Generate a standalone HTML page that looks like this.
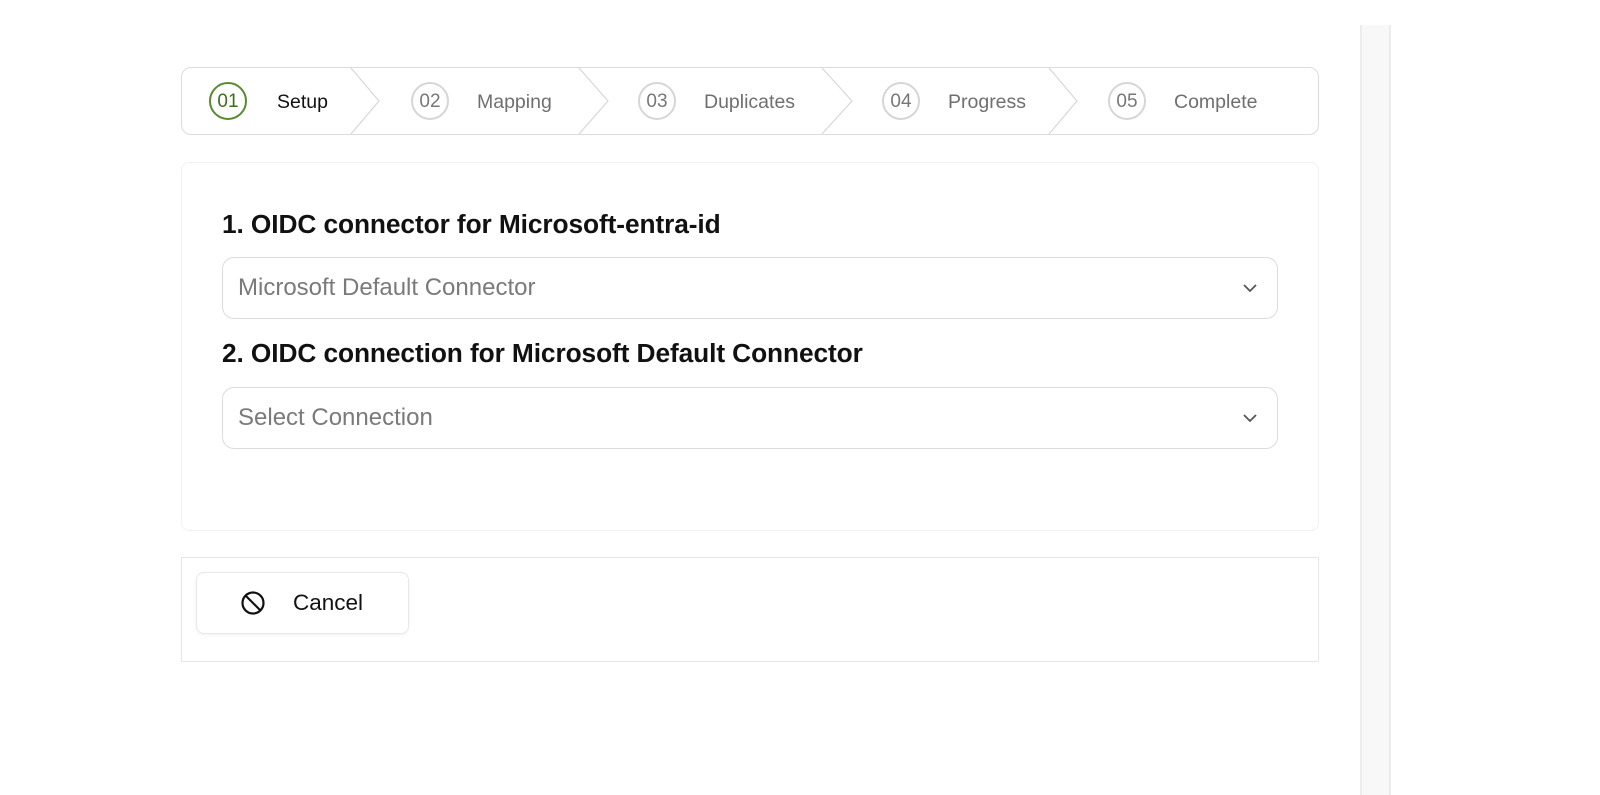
<!DOCTYPE html>
<html><head><meta charset="utf-8"><style>
*{box-sizing:border-box;margin:0;padding:0}
body{width:1600px;height:795px;background:#fff;font-family:"Liberation Sans",sans-serif;position:relative;overflow:hidden}
.a{position:absolute}
.circ{position:absolute;width:38px;height:38px;border-radius:50%;border:2.5px solid #d6d6d6;color:#777;font-size:19px;display:flex;align-items:center;justify-content:center;padding-top:2px}
.lbl{position:absolute;top:91px;font-size:19.5px;color:#6f6f6f;line-height:22px}
.inp{position:absolute;left:222px;width:1056px;height:62px;border:1px solid #dcdcdc;border-radius:12px;font-size:24px;color:#7a7a7a;padding-left:15px;line-height:60px}
.h{position:absolute;left:222px;font-size:26.3px;font-weight:bold;color:#111;letter-spacing:-0.1px}
</style></head><body>
<div class="a" style="left:1360px;top:25px;width:31px;height:770px;background:#f8f8f8;border-left:2px solid #ececec;border-right:2px solid #ececec"></div>

<div class="a" style="left:181px;top:67px;width:1138px;height:68px;border:1px solid #dcdcdc;border-radius:10px"></div>
<svg class="a" style="left:0;top:0" width="1600" height="140">
<g fill="none" stroke="#d8d8d8" stroke-width="1.2">
<polyline points="351,68 379,101 351,134"/>
<polyline points="579,68 608,101 579,134"/>
<polyline points="822,68 852,101 822,134"/>
<polyline points="1049,68 1077,101 1049,134"/>
</g></svg>
<div class="circ" style="left:209px;top:82px;border-color:#5a8a2e;color:#3d6e1c">01</div>
<div class="lbl" style="left:277px;color:#111">Setup</div>
<div class="circ" style="left:411px;top:82px">02</div>
<div class="lbl" style="left:477px">Mapping</div>
<div class="circ" style="left:638px;top:82px">03</div>
<div class="lbl" style="left:704px">Duplicates</div>
<div class="circ" style="left:882px;top:82px">04</div>
<div class="lbl" style="left:948px">Progress</div>
<div class="circ" style="left:1108px;top:82px">05</div>
<div class="lbl" style="left:1174px">Complete</div>

<div class="a" style="left:181px;top:162px;width:1138px;height:369px;border:1px solid #f1f1f1;border-radius:8px"></div>
<div class="h" style="top:209px">1. OIDC connector for Microsoft-entra-id</div>
<div class="inp" style="top:257px">Microsoft Default Connector</div>
<div class="h" style="top:338px">2. OIDC connection for Microsoft Default Connector</div>
<div class="inp" style="top:387px">Select Connection</div>
<svg class="a" style="left:1243px;top:283px" width="14" height="10"><polyline points="1,2 7,8 13,2" fill="none" stroke="#555" stroke-width="1.8"/></svg>
<svg class="a" style="left:1243px;top:413px" width="14" height="10"><polyline points="1,2 7,8 13,2" fill="none" stroke="#555" stroke-width="1.8"/></svg>

<div class="a" style="left:181px;top:557px;width:1138px;height:105px;border:1px solid #e6e6e6"></div>
<div class="a" style="left:196px;top:572px;width:213px;height:62px;border:1px solid #e8e8e8;border-radius:8px;box-shadow:0 1px 3px rgba(0,0,0,.06)"></div>
<svg class="a" style="left:240px;top:590px" width="26" height="26"><circle cx="13" cy="13" r="10.5" fill="none" stroke="#111" stroke-width="2.2"/><line x1="5.6" y1="5.6" x2="20.4" y2="20.4" stroke="#111" stroke-width="2.2"/></svg>
<div class="a" style="left:293px;top:590px;font-size:22.5px;color:#111">Cancel</div>
</body></html>
